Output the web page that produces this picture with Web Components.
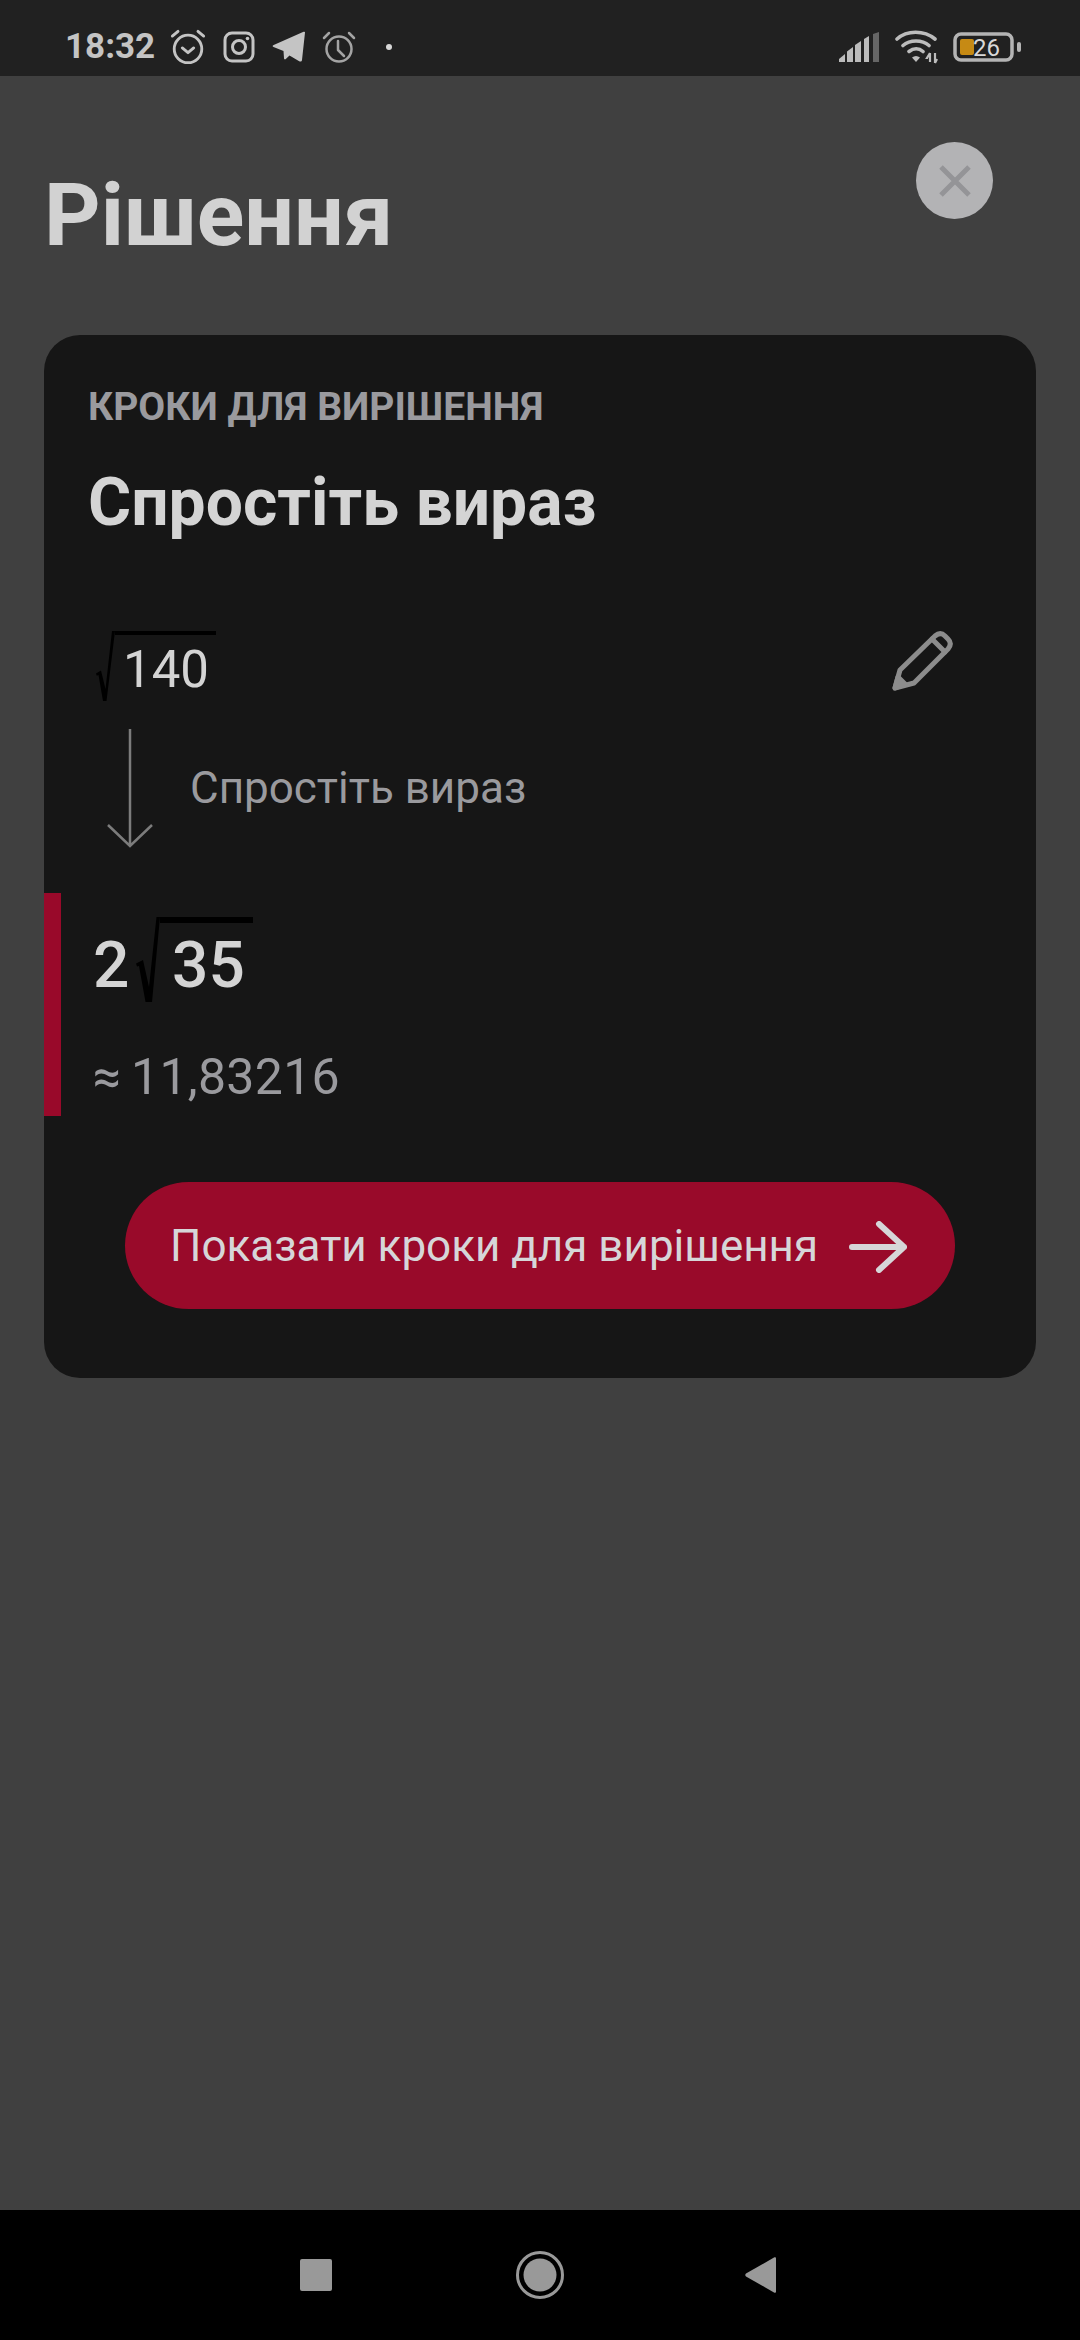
<!DOCTYPE html>
<html lang="uk">
<head>
<meta charset="utf-8">
<title>Рішення</title>
<style>
  html, body { margin: 0; padding: 0; background: #404040; }
  body { width: 1080px; height: 2340px; font-family: Roboto, "Noto Sans", sans-serif; overflow: hidden; }
  #app { display: flex; flex-direction: column; height: 2340px; }
  main-area { flex: 1; }
</style>
</head>
<body>
<div id="app">
  <status-bar></status-bar>
  <main-area>
    <page-header>Рішення</page-header>
    <solve-card></solve-card>
  </main-area>
  <nav-bar></nav-bar>
</div>
<script>
class Base extends HTMLElement {
  constructor() {
    super();
    this.attachShadow({ mode: 'open' });
    this.shadowRoot.innerHTML = this.markup();
  }
}

// статусная строка
class StatusBar extends Base {
  markup() {
    return `
    <style>
      :host { display: flex; align-items: center; height: 76px; background: #212121; color: #c4c4c4; box-sizing: border-box; padding: 18px 59px 0 65px; flex: none; }
      .time { font: 700 35px/1 Roboto, sans-serif; width: 103.500px; margin-top: -2px; }
      svg { display: block; flex: none; }
      .left { display: flex; align-items: center; }
      .right { margin-left: auto; display: flex; align-items: center; }
    </style>
    <div class="left">
      <span class="time">18:32</span>
      <svg width="38" height="40" viewBox="0 0 40 40" fill="none" stroke="#c4c4c4" stroke-width="3" stroke-linecap="round" stroke-linejoin="round" style="margin-right:16.500px;margin-top:-1px">
        <circle cx="20" cy="22" r="14.500"/><path d="M14 21l6 5 6-5"/><path d="M3.500 8.500 9.500 3.500M36.500 8.500 30.500 3.500"/>
      </svg>
      <svg width="32" height="32" viewBox="0 0 32 32" fill="none" stroke="#c4c4c4" stroke-width="3" style="margin-right:17px">
        <rect x="2" y="2" width="28" height="28" rx="7"/><circle cx="16" cy="16" r="6.500"/><circle cx="24.500" cy="7.500" r="1.800" fill="#c4c4c4" stroke="none"/>
      </svg>
      <svg width="34" height="32" viewBox="0 0 34 32" style="margin-right:16px">
        <path d="M33 1.500 30 29c-.2 1.600-1.500 2-2.800 1.200l-9.700-5.600-3.700 3.500c-.8.700-1.700.3-1.800-.8L11.500 20 1.500 16c-1.200-.6-1.200-1.500.2-2.100L31 1c1.300-.5 2.200-.4 2 .5z" fill="#c4c4c4"/>
      </svg>
      <svg width="34" height="34" viewBox="0 0 34 34" fill="none" stroke="#a4a4a4" stroke-width="2.500" stroke-linecap="round" stroke-linejoin="round">
        <circle cx="17" cy="19" r="12.500"/><path d="M16 11v9l6 6"/><path d="M2 8l5-5M32 8l-5-5"/>
      </svg>
      <svg width="8" height="8" viewBox="0 0 8 8" style="margin-left:29px"><circle cx="4" cy="4" r="3" fill="#d8d8d8"/></svg>
    </div>
    <div class="right">
      <svg width="40" height="30" viewBox="0 0 40 30" style="margin-right:16px">
        <path d="M0 30v-3l6-5v8z" fill="#bcbcbc"/>
        <path d="M8 19.500l6-4.500V30H8z" fill="#bcbcbc"/>
        <path d="M16 13l6-4v21h-6z" fill="#bcbcbc"/>
        <path d="M25 7l5-3v26h-5z" fill="#bcbcbc"/>
        <path d="M34 2l6-2v30h-6z" fill="#666"/>
      </svg>
      <svg width="44" height="34" viewBox="0 0 44 34" fill="none" style="margin-right:14px">
        <path d="M2 9c10-9 27-9 38 0M8 15.500c7-6 19-6 26 0M14 21.500c4.500-3.500 10-3.500 14 0" stroke="#bcbcbc" stroke-width="3.600" stroke-linecap="round"/>
        <path d="M17 27.500c2.500-2 5.500-2 8 0l-4 4.500z" fill="#bcbcbc"/>
        <path d="M35 23v9M33 28h-1l3-5M40 23v10M40 33l2-4" stroke="#bcbcbc" stroke-width="2.200"/>
      </svg>
      <svg width="68" height="30" viewBox="0 0 68 30" fill="none">
        <rect x="2" y="2" width="57" height="26" rx="6" stroke="#b4b4b4" stroke-width="3.500"/>
        <rect x="7" y="7" width="14" height="16" rx="2" fill="#c68a14"/>
        <text x="20" y="24" font-family="Roboto, sans-serif" font-size="24" fill="#d8d8d8">26</text>
        <rect x="64" y="10" width="4" height="10" rx="2" fill="#b4b4b4"/>
      </svg>
    </div>`;
  }
}

class PageHeader extends Base {
  markup() {
    return `
    <style>
      :host { display: flex; justify-content: space-between; align-items: flex-start; height: 259px; box-sizing: border-box; padding: 66px 87px 0 44px; }
      .title { font: 700 88px/1 Roboto, sans-serif; color: #d2d2d2; margin: 29px 0 0; }
      .close { width: 77px; height: 77px; border-radius: 50%; background: #b3b3b5; display: flex; align-items: center; justify-content: center; }
    </style>
    <h1 class="title"><slot></slot></h1>
    <div class="close">
      <svg width="32" height="32" viewBox="0 0 32 32" fill="none" stroke="#949497" stroke-width="5"><path d="M2 2l28 28M30 2 2 30"/></svg>
    </div>`;
  }
}

// корень: радикал + подкоренное выражение
class MathRoot extends Base {
  markup() {
    const w = this.getAttribute('w');
    const h = this.getAttribute('h');
    return `
    <style>
      :host { display: inline-flex; align-items: flex-start; }
      svg { display: block; flex: none; }
      .radicand { display: block; border-top: var(--bar, 4px) solid #000; padding: var(--pad, 0 8px 0 11px); line-height: 1; }
    </style>
    <svg width="${w}" height="${h}" viewBox="0 0 ${w} ${h}" fill="none">
      <path d="${this.getAttribute('d')}" fill="#000"/>
    </svg>
    <span class="radicand"><slot></slot></span>`;
  }
}

class ResultBlock extends Base {
  markup() {
    return `
    <style>
      :host { display: block; height: 223px; box-sizing: border-box; border-left: 17px solid #99092a; padding: 24px 0 0 32px; }
      .exact { display: flex; align-items: flex-start; font: 500 64px/1 Roboto, sans-serif; color: #d4d4d4; height: 135px; }
      .two { margin-top: 17px; width: 43px; }
      .approx { font: 400 50px/1 Roboto, sans-serif; color: #9a9a9e; letter-spacing: .3px; }
      .approx span { margin-right: 9.500px; }
      math-root { --bar: 6px; --pad: 11px 8px 0 12px; }
    </style>
    <div class="exact">
      <span class="two">2</span>
      <math-root w="24" h="85" d="M0 46.500 7 43 13 70 20.500 0H24L16 85H9.500L3 49 1 49.500z">35</math-root>
    </div>
    <div class="approx"><span>≈</span>11,83216</div>`;
  }
}

class SolveCard extends Base {
  markup() {
    return `
    <style>
      :host { display: block; margin: 0 44px; height: 1043px; box-sizing: border-box; background: #161616; border-radius: 36px; padding-top: 53px; color: #d4d4d4; }
      .label { font: 700 39px/1 Roboto, sans-serif; color: #9a9a9e; margin: 0 44px; }
      .head { font: 700 66px/1 Roboto, sans-serif; color: #d4d4d4; margin: 43px 44px 0; }
      .expr { display: flex; justify-content: space-between; align-items: flex-start; margin: 0 0 0 51px; height: 96px; font: 400 51px/1 Roboto, sans-serif; color: #d4d4d4; }
      .edit { display: block; margin: -1px 83px 0 0; }
      .step { display: flex; align-items: center; height: 123px; margin-left: 62px; }
      .step span { font: 400 44px/1 Roboto, sans-serif; color: #9a9a9e; margin-left: 36px; margin-top: -1px; }
      .exprwrap { margin-top: 95px; }
      result-block { margin-top: 43px; }
      .btn { display: flex; align-items: center; justify-content: space-between; height: 127px; margin: 66px 81px 0 81px; border-radius: 64px; background: #990a2a; padding: 0 48px 0 45px; font: 400 44px/1 Roboto, sans-serif; color: #d6d6d8; box-sizing: border-box; }
      .btn svg { display: block; margin-top: 2px; }
      math-root { --bar: 4px; --pad: 9px 7px 0 8px; }
    </style>
    <div class="label">КРОКИ ДЛЯ ВИРІШЕННЯ</div>
    <div class="head">Спростіть вираз</div>
    <div class="exprwrap">
      <div class="expr">
        <math-root w="20" h="70" d="M1 42.500 6 39.500 10.500 58 17 0H20L11.500 70H8L3.500 44 1.800 44.800z">140</math-root>
        <svg class="edit" width="62" height="62" viewBox="0 0 62 62" fill="none" stroke="#8c8c8c" stroke-width="5" stroke-linejoin="round" stroke-linecap="round">
          <path d="M4 58 9 40 44 6c3.500-3 7-3 10 0l3 3c3 3 3 6.500 0 10L23 53z"/><path d="M41 9 54 22"/><path d="M4 58 7 47 14 54z" fill="#8c8c8c"/>
        </svg>
      </div>
      <div class="step">
        <svg width="48" height="119" viewBox="0 0 48 119" fill="none" stroke="#7c7c7c" stroke-width="2.500"><path d="M24 0v117M2 96l22 21 22-21"/></svg>
        <span>Спростіть вираз</span>
      </div>
    </div>
    <result-block></result-block>
    <div class="btn">
      <span>Показати кроки для вирішення</span>
      <svg width="58" height="52" viewBox="0 0 58 52" fill="none" stroke="#d6d6d8" stroke-width="6" stroke-linecap="round" stroke-linejoin="round"><path d="M3 26h52M30 3l25 23-25 23"/></svg>
    </div>`;
  }
}

class NavBar extends Base {
  markup() {
    return `
    <style>
      :host { display: flex; align-items: center; justify-content: center; height: 130px; background: #000; flex: none; }
      .row { display: flex; align-items: center; margin-right: 4px; }
      svg { display: block; flex: none; }
    </style>
    <div class="row">
      <svg width="32" height="32" viewBox="0 0 32 32" style="margin-right:184px"><rect width="32" height="32" rx="2" fill="#999"/></svg>
      <svg width="48" height="48" viewBox="0 0 48 48" style="margin-right:181px"><circle cx="24" cy="24" r="22.500" fill="none" stroke="#999" stroke-width="3"/><circle cx="24" cy="24" r="16.500" fill="#999"/></svg>
      <svg width="31" height="36" viewBox="0 0 31 36"><path d="M1 16.500 29 .6c1-.5 2-.2 2 1V34.400c0 1.200-1 1.500-2 1L1 19.500c-1-.8-1-2.200 0-3z" fill="#999"/></svg>
    </div>`;
  }
}

customElements.define('math-root', MathRoot);
customElements.define('result-block', ResultBlock);
customElements.define('status-bar', StatusBar);
customElements.define('page-header', PageHeader);
customElements.define('solve-card', SolveCard);
customElements.define('nav-bar', NavBar);
</script>
</body>
</html>
